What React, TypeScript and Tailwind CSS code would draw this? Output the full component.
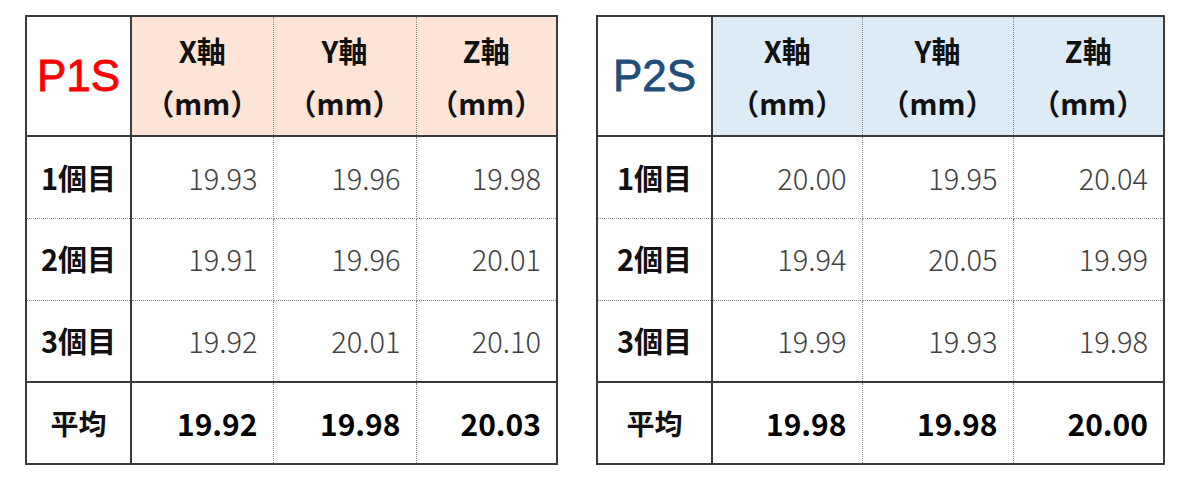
import React from 'react';

type Sheet = {
  name: string;
  nameColor: string;
  headBg: string;
  widths: number[];
  rows: string[][];
  avg: string[];
};

const sheets: Sheet[] = [
  {
    name: 'P1S',
    nameColor: 'text-[#ff0000]',
    headBg: 'bg-[#fce4d6]',
    widths: [105, 142, 143, 141],
    rows: [
      ['19.93', '19.96', '19.98'],
      ['19.91', '19.96', '20.01'],
      ['19.92', '20.01', '20.10'],
    ],
    avg: ['19.92', '19.98', '20.03'],
  },
  {
    name: 'P2S',
    nameColor: 'text-[#1f4e79]',
    headBg: 'bg-[#ddebf7]',
    widths: [115, 150, 151, 151],
    rows: [
      ['20.00', '19.95', '20.04'],
      ['19.94', '20.05', '19.99'],
      ['19.99', '19.93', '19.98'],
    ],
    avg: ['19.98', '19.98', '20.00'],
  },
];

const jp = "font-['Noto_Sans_CJK_JP',sans-serif]";
// solid 2px frame lines, dotted 1px grid lines
const frame = 'border-[#3a3a3a]';
const dotR = 'border-r border-r-[#8a8a8a] [border-right-style:dotted]';
const dotB = 'border-b border-b-[#8a8a8a] [border-bottom-style:dotted]';

const SheetTable = ({ sheet }: { sheet: Sheet }) => {
  return (
    <table
      className={`table-fixed border-collapse border-2 ${frame} ${jp}`}
      style={{ width: sheet.widths.reduce((a, b) => a + b, 0) }}
    >
      <colgroup>
        {sheet.widths.map((w, i) => (
          <col key={i} style={{ width: w }} />
        ))}
      </colgroup>
      <thead>
        <tr className="h-[120px]">
          <th className={`border-2 ${frame} bg-white`}>
            <span
              className={`font-['Liberation_Sans',sans-serif] text-[44px] font-normal [-webkit-text-stroke:0.8px_currentColor] ${sheet.nameColor}`}
            >
              {sheet.name}
            </span>
          </th>
          {['X軸', 'Y軸', 'Z軸'].map((axis, i) => (
            <th
              key={axis}
              className={`${sheet.headBg} border-y-2 border-y-[#3a3a3a] ${
                i < 2 ? dotR : 'border-r-2 border-r-[#3a3a3a]'
              } text-[29px] font-bold leading-[52px] text-[#111]`}
            >
              <div>{axis}</div>
              <div>（mm）</div>
            </th>
          ))}
        </tr>
      </thead>
      <tbody>
        {sheet.rows.map((row, r) => (
          <tr key={r} className="h-[82px]">
            <td
              className={`border-x-2 border-x-[#3a3a3a] ${
                r < 2 ? dotB : 'border-b-2 border-b-[#3a3a3a]'
              } text-center text-[29px] font-bold text-[#111]`}
            >
              {r + 1}個目
            </td>
            {row.map((v, c) => (
              <td
                key={c}
                className={`${r < 2 ? dotB : 'border-b-2 border-b-[#3a3a3a]'} ${
                  c < 2 ? dotR : ''
                } pr-[15px] text-right text-[29px] font-light text-[#404040]`}
              >
                {v}
              </td>
            ))}
          </tr>
        ))}
        <tr className="h-[82px]">
          <td className={`border-2 ${frame} text-center text-[28px] font-bold text-[#111]`}>平均</td>
          {sheet.avg.map((v, c) => (
            <td
              key={c}
              className={`border-t-2 border-t-[#3a3a3a] ${
                c < 2 ? dotR : ''
              } pr-[15px] text-right text-[30px] font-bold text-black`}
            >
              {v}
            </td>
          ))}
        </tr>
      </tbody>
    </table>
  );
};

export default function App() {
  return (
    <div className="w-[1188px] h-[497px] bg-white pl-[25px] pt-[15px] flex gap-[38px] items-start">
      {sheets.map((s) => (
        <SheetTable key={s.name} sheet={s} />
      ))}
    </div>
  );
}
